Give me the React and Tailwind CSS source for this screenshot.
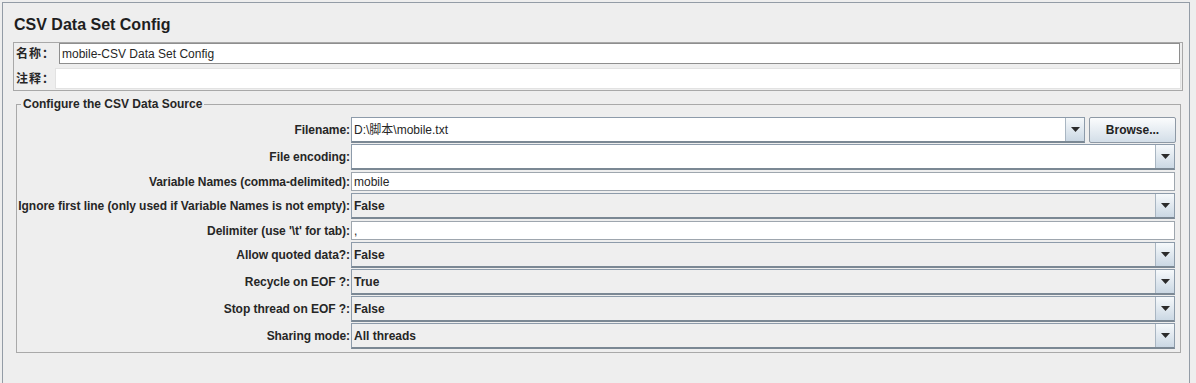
import React from 'react';

const sans = "font-['Liberation_Sans','Noto_Sans_CJK_SC',sans-serif]";

function Arrow() {
  return (
    <svg width="9" height="5" viewBox="0 0 9 5">
      <path d="M0 0h9L4.5 5z" fill="#2b2b2b" />
    </svg>
  );
}

function Combo({ value, editable, className = 'w-[824px]' }) {
  return (
    <div
      className={`flex h-[26px] border border-[#8d9baa] border-b-2 border-b-[#7b8894] ${
        editable ? 'bg-white font-normal' : 'bg-[#efefef] font-bold'
      } ${className}`}
    >
      <div className="flex-1 flex items-center pl-[2px] whitespace-nowrap overflow-hidden">{value}</div>
      <div className="w-[19px] flex items-center justify-center border-l border-[#a9b6c2] bg-linear-to-b from-[#f6f9fb] to-[#cbd8e4]">
        <Arrow />
      </div>
    </div>
  );
}

function TextField({ value }) {
  return (
    <div className="w-[824px] h-[19px] flex items-center pl-[2px] bg-white border border-[#9ea6ae] font-normal">
      {value}
    </div>
  );
}

function Row({ label, mt, children }) {
  return (
    <div className={`flex items-center ${mt}`}>
      <div className="w-[334px] pr-[1px] text-right font-bold whitespace-nowrap tracking-[-0.05px]">{label}</div>
      {children}
    </div>
  );
}

export default function App() {
  return (
    <div className={`w-[1196px] h-[383px] overflow-hidden bg-[#eeeeee] pt-[2px] pl-[2px] text-[12px] leading-[14px] text-[#262626] ${sans}`}>
      <div className="w-[1188px] h-[381px] border-t border-l border-r border-[#939ca6]">
        <h1 className="mt-[12px] ml-[11px] text-[16px] leading-[20px] font-bold text-[#1e1e1e]">CSV Data Set Config</h1>

        {/* name / comment */}
        <div className="mt-[7px] ml-[10px] w-[1170px] h-[49px] border border-[#a8a8a8]">
          <div className="flex items-center h-[21px]">
            <div className="w-[45px] pl-[2px] font-bold tracking-[1px]">名称：</div>
            <div className="flex-1 mr-[2px] h-[21px] flex items-center pl-[2px] bg-white border border-[#8e8e8e]">
              mobile-CSV Data Set Config
            </div>
          </div>
          <div className="flex items-center h-[21px] mt-[4px]">
            <div className="w-[41px] pl-[2px] font-bold tracking-[1px]">注释：</div>
            <div className="flex-1 mr-[1px] h-[21px] bg-white border border-[#e2e2e2]" />
          </div>
        </div>

        {/* CSV data source */}
        <fieldset className="mt-[6px] ml-[13px] w-[1165px] border border-[#a9a9a9] pb-[3px]">
          <legend className="ml-[4px] px-[2px] font-bold leading-[14px] text-[#262626]">Configure the CSV Data Source</legend>
          <div className="pt-[6px]">
            <Row label="Filename:" mt="mt-0">
              <Combo value="D:\脚本\mobile.txt" editable className="w-[734px]" />
              <button
                type="button"
                className="ml-[4px] w-[87px] h-[26px] border border-[#8e99a5] rounded-[2px] bg-linear-to-b from-[#fbfcfd] to-[#d3dee8] font-bold text-[#222]"
              >
                Browse...
              </button>
            </Row>
            <Row label="File encoding:" mt="mt-[1px]">
              <Combo value="" editable />
            </Row>
            <Row label="Variable Names (comma-delimited):" mt="mt-[2px]">
              <TextField value="mobile" />
            </Row>
            <Row label="Ignore first line (only used if Variable Names is not empty):" mt="mt-[2px]">
              <Combo value="False" />
            </Row>
            <Row label="Delimiter (use '\t' for tab):" mt="mt-[2px]">
              <TextField value="," />
            </Row>
            <Row label="Allow quoted data?:" mt="mt-[2px]">
              <Combo value="False" />
            </Row>
            <Row label="Recycle on EOF ?:" mt="mt-[1px]">
              <Combo value="True" />
            </Row>
            <Row label="Stop thread on EOF ?:" mt="mt-[1px]">
              <Combo value="False" />
            </Row>
            <Row label="Sharing mode:" mt="mt-[1px]">
              <Combo value="All threads" />
            </Row>
          </div>
        </fieldset>
      </div>
    </div>
  );
}
